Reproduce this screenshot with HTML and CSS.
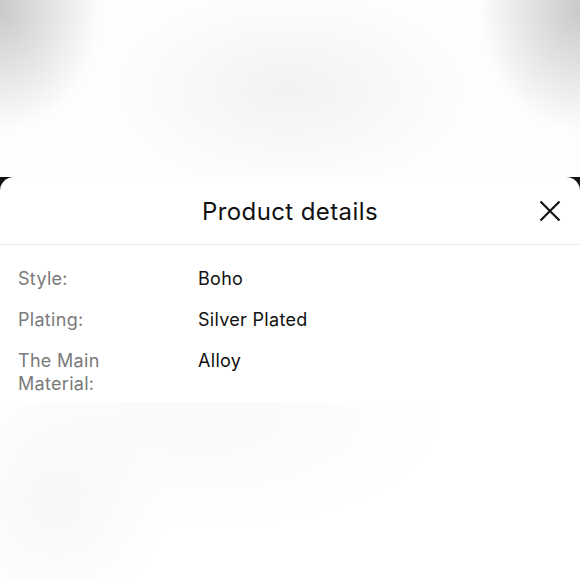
FILE: index.html
```html
<!DOCTYPE html>
<html lang="en">
<head>
  <meta charset="UTF-8" />
  <meta name="viewport" content="width=device-width, initial-scale=1.0" />
  <title>Product details</title>
  <link rel="stylesheet" href="styles.css">
</head>
<body>
  <div class="backdrop"></div>

  <div class="sheet-wrap">
    <section class="sheet">
      <header class="sheet-header">
        <h1>Product details</h1>
        <button class="close-btn" aria-label="Close">
          <svg width="22" height="22" viewBox="0 0 22 22">
            <path d="M1.5 1.5 L20.5 20.5 M20.5 1.5 L1.5 20.5" stroke="#111" stroke-width="2.2" fill="none" />
          </svg>
        </button>
      </header>

      <dl class="details">
        <div class="row">
          <dt>Style:</dt>
          <dd>Boho</dd>
        </div>
        <div class="row">
          <dt>Plating:</dt>
          <dd>Silver Plated</dd>
        </div>
        <div class="row">
          <dt>The Main Material:</dt>
          <dd>Alloy</dd>
        </div>
      </dl>
    </section>
  </div>

  <div class="below"></div>
</body>
</html>
```

FILE: styles.css
```css
body {
  font-family: Inter, "Liberation Sans", Arial, sans-serif;
  margin: 0;
  padding: 0;
  background: #fff;
  color: #111;
}

.backdrop {
  height: 177px;
  background:
    radial-gradient(ellipse 170px 95px at 290px 90px, #f2f2f2, rgba(255, 255, 255, 0)),
    radial-gradient(ellipse 100px 120px at 0 10px, #c9c9c9, rgba(255, 255, 255, 0)),
    radial-gradient(ellipse 100px 120px at 580px 10px, #c9c9c9, rgba(255, 255, 255, 0)),
    #fdfdfd;
}

.sheet-wrap {
  background: #111;
}

.sheet {
  background: #fff;
  border-radius: 14px 14px 0 0;
}

.sheet-header {
  height: 67px;
  display: flex;
  align-items: center;
  justify-content: center;
  position: relative;
  border-bottom: 1px solid #ececec;
}

.sheet-header h1 {
  margin: 0;
  padding-top: 1px;
  font-size: 24px;
  font-weight: 400;
  letter-spacing: 0.4px;
  color: #111;
}

.close-btn {
  position: absolute;
  right: 19px;
  top: 23px;
  width: 22px;
  height: 22px;
  padding: 0;
  border: none;
  background: none;
  cursor: pointer;
}

.close-btn svg {
  display: block;
}

.details {
  margin: 0;
  padding: 22px 18px 7px;
  display: flex;
  flex-direction: column;
  gap: 18px;
}

.row {
  display: flex;
  font-size: 18px;
  line-height: 23px;
  letter-spacing: 0.3px;
}

.row dt {
  width: 110px;
  margin-right: 70px;
  color: #7a7a7a;
}

.row dd {
  margin: 0;
  color: #111;
}

.below {
  height: 178px;
  background:
    radial-gradient(ellipse 110px 110px at 55px 100px, #f7f7f7, rgba(255, 255, 255, 0)),
    radial-gradient(ellipse 240px 110px at 200px 15px, #f9f9f9, rgba(255, 255, 255, 0)),
    #fff;
}
```
